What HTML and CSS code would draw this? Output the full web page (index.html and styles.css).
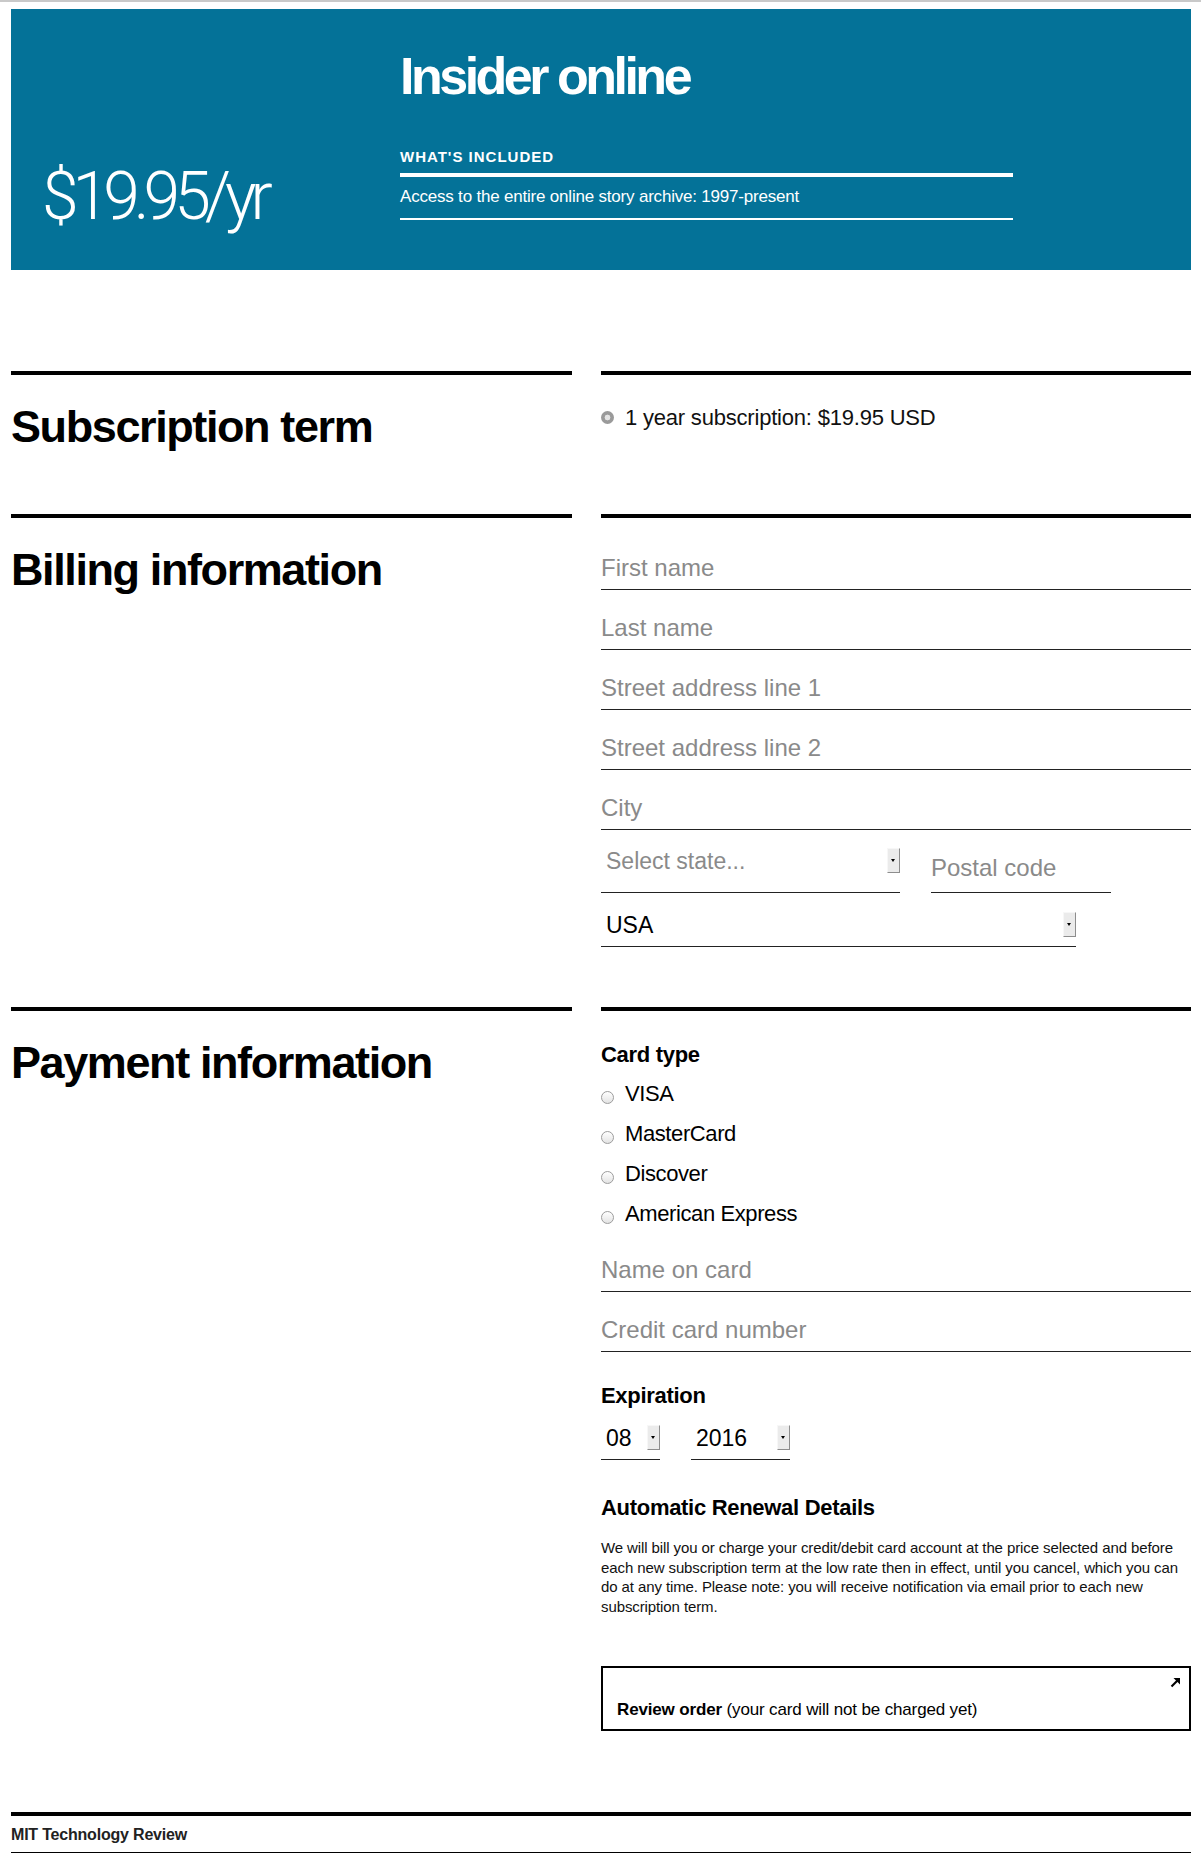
FILE: index.html
```html
<!DOCTYPE html>
<html lang="en">
<head>
<meta charset="utf-8">
<title>Insider online – Subscribe</title>
<link rel="stylesheet" href="styles.css">
</head>
<body>
<div class="page">
  <header class="hero">
    <div class="hero-price">$19.95/yr</div>
    <div class="hero-main">
      <h1 class="hero-title">Insider online</h1>
      <h2 class="hero-label">WHAT'S INCLUDED</h2>
      <ul class="hero-list">
        <li>Access to the entire online story archive: 1997-present</li>
      </ul>
    </div>
  </header>

  <form class="checkout" onsubmit="return false">
    <section class="row">
      <div class="row-head"><h2>Subscription term</h2></div>
      <div class="row-body row-body-term">
        <label class="term-option"><span class="radio radio-checked"></span>1 year subscription: $19.95 USD</label>
      </div>
    </section>

    <section class="row">
      <div class="row-head"><h2>Billing information</h2></div>
      <div class="row-body row-body-billing">
        <input class="field" type="text" placeholder="First name">
        <input class="field" type="text" placeholder="Last name">
        <input class="field" type="text" placeholder="Street address line 1">
        <input class="field" type="text" placeholder="Street address line 2">
        <input class="field" type="text" placeholder="City">
        <div class="field-pair">
          <div class="select select-state">
            <select class="is-placeholder"><option>Select state...</option></select>
            <span class="select-arrow"></span>
          </div>
          <input class="field field-postal" type="text" placeholder="Postal code">
        </div>
        <div class="select select-country">
          <select><option>USA</option></select>
          <span class="select-arrow"></span>
        </div>
      </div>
    </section>

    <section class="row">
      <div class="row-head"><h2>Payment information</h2></div>
      <div class="row-body row-body-payment">
        <h3 class="sub-head">Card type</h3>
        <ul class="card-options">
          <li class="card-option"><span class="radio"></span>VISA</li>
          <li class="card-option"><span class="radio"></span>MasterCard</li>
          <li class="card-option"><span class="radio"></span>Discover</li>
          <li class="card-option"><span class="radio"></span>American Express</li>
        </ul>
        <input class="field field-card" type="text" placeholder="Name on card">
        <input class="field" type="text" placeholder="Credit card number">

        <h3 class="sub-head sub-head-exp">Expiration</h3>
        <div class="exp-row">
          <div class="select select-month">
            <select><option>08</option></select>
            <span class="select-arrow"></span>
          </div>
          <div class="select select-year">
            <select><option>2016</option></select>
            <span class="select-arrow"></span>
          </div>
        </div>

        <h3 class="sub-head sub-head-renew">Automatic Renewal Details</h3>
        <p class="renew-text">We will bill you or charge your credit/debit card account at the price selected and before each new subscription term at the low rate then in effect, until you cancel, which you can do at any time. Please note: you will receive notification via email prior to each new subscription term.</p>

        <button class="review-btn" type="submit">
          <span class="review-text"><strong>Review order</strong> (your card will not be charged yet)</span>
          <svg class="review-arrow" width="11" height="11" viewBox="0 0 11 11" aria-hidden="true">
            <path d="M1.5 9.5 L7.5 3.5" stroke="#000" stroke-width="2.2" fill="none"/>
            <path d="M3.5 1 H10 V7.5 Z" fill="#000"/>
          </svg>
        </button>
      </div>
    </section>
  </form>

  <footer class="site-footer">MIT Technology Review</footer>
</div>
</body>
</html>
```

FILE: styles.css
```css
* {
  box-sizing: border-box;
}

body {
  margin: 0;
  border-top: 2px solid #c9c9c9;
  background: #fff;
  color: #000;
  font-family: "Liberation Sans", Arial, sans-serif;
}

.page {
  margin: 7px 10px 0 11px;
}

/* ---------- Hero ---------- */
.hero {
  background: #047298;
  color: #fff;
  display: grid;
  grid-template-columns: 358px 613px;
  padding: 41px 0 50px 31px;
}

.hero-price {
  align-self: end;
  margin-bottom: -5px;
  font-family: "Roboto", "Liberation Sans", sans-serif;
  font-weight: 300;
  font-size: 66px;
  line-height: 56px;
  letter-spacing: -6px;
  white-space: nowrap;
}

.hero-title {
  margin: 0 0 46px;
  font-size: 52px;
  line-height: 52px;
  font-weight: 700;
  letter-spacing: -3.5px;
}

.hero-label {
  margin: 0 0 7px;
  font-size: 15px;
  line-height: 18px;
  font-weight: 700;
  letter-spacing: 1px;
}

.hero-list {
  list-style: none;
  margin: 0;
  padding: 10px 0 11px;
  border-top: 4px solid #fff;
  border-bottom: 2px solid #fff;
  font-size: 17px;
  line-height: 20px;
  letter-spacing: -0.2px;
}

/* ---------- Form rows ---------- */
.checkout {
  margin-top: 101px;
}

.row {
  display: grid;
  grid-template-columns: 561px 590px;
  column-gap: 29px;
}

.row-head,
.row-body {
  border-top: 4px solid #000;
}

.row-head h2 {
  margin: 29px 0 0;
  font-size: 45px;
  line-height: 45px;
  font-weight: 700;
  letter-spacing: -1.4px;
}

.row-body-term {
  padding: 30px 0 83px;
}

.term-option {
  display: block;
  font-size: 22px;
  line-height: 26px;
  letter-spacing: -0.2px;
  color: #111;
}

.radio {
  display: inline-block;
  width: 13px;
  height: 13px;
  border-radius: 50%;
  border: 1px solid #9c9c9c;
  background: linear-gradient(#ffffff, #e3e3e3);
  margin-right: 11px;
  vertical-align: -3px;
}

.radio-checked {
  border: 0;
  background: radial-gradient(circle, #e4e4e4 0 2.6px, #9a9a9a 3.2px);
  vertical-align: 1px;
}

/* ---------- Fields ---------- */
.row-body-billing {
  padding: 22px 0 60px;
}

.field {
  display: block;
  width: 100%;
  height: 50px;
  margin: 0 0 10px;
  padding: 6px 0 0;
  border: 0;
  border-bottom: 1px solid #222;
  border-radius: 0;
  background: transparent;
  font-family: "Liberation Sans", Arial, sans-serif;
  font-size: 24px;
  color: #000;
  outline: none;
}

.field::placeholder {
  color: #8a8a8a;
  opacity: 1;
}

.field-pair {
  display: flex;
  align-items: flex-end;
  gap: 31px;
  margin: 13px 0 19px;
}

.field-postal {
  width: 180px;
  margin: 0;
  padding-top: 0;
}

.select {
  position: relative;
  border-bottom: 1px solid #222;
  padding-bottom: 8px;
}

.select select {
  display: block;
  width: 100%;
  height: 26px;
  margin: 0;
  padding: 0 18px 0 5px;
  border: 0;
  border-radius: 0;
  background: transparent;
  -webkit-appearance: none;
  appearance: none;
  font-family: "Liberation Sans", Arial, sans-serif;
  font-size: 23px;
  line-height: 26px;
  color: #000;
  outline: none;
}

.select select.is-placeholder {
  color: #8a8a8a;
}

.select-arrow {
  position: absolute;
  right: 0;
  top: 0;
  width: 13px;
  height: 25px;
  background: #ebebeb;
  border: 1px solid;
  border-color: #f7f7f7 #8d8d8d #8d8d8d #f7f7f7;
  pointer-events: none;
}

.select-arrow::after {
  content: "";
  position: absolute;
  left: 3px;
  top: 10px;
  border-left: 2.5px solid transparent;
  border-right: 2.5px solid transparent;
  border-top: 3px solid #000;
}

.select-state {
  width: 299px;
  padding-bottom: 18px;
}

.select-country {
  width: 475px;
}

/* ---------- Payment ---------- */
.row-body-payment {
  padding: 0 0 81px;
}

.sub-head {
  margin: 31px 0 0;
  font-size: 22px;
  line-height: 26px;
  font-weight: 700;
  letter-spacing: -0.3px;
}

.card-options {
  list-style: none;
  margin: 6px 0 0;
  padding: 0;
}

.card-option {
  font-size: 22px;
  line-height: 40px;
  letter-spacing: -0.4px;
}

.field-card {
  margin-top: 8px;
}

.sub-head-exp {
  margin-top: 31px;
}

.exp-row {
  display: flex;
  gap: 31px;
  margin-top: 16px;
}

.select-month {
  width: 59px;
}

.select-year {
  width: 99px;
}

.sub-head-renew {
  margin-top: 35px;
}

.renew-text {
  margin: 17px 0 0;
  font-size: 15px;
  line-height: 19.5px;
  letter-spacing: -0.1px;
  color: #111;
}

.review-btn {
  position: relative;
  display: flex;
  align-items: flex-end;
  width: 100%;
  height: 65px;
  margin-top: 50px;
  padding: 0 14px 8px;
  border: 2px solid #000;
  border-radius: 0;
  background: #fff;
  color: #000;
  text-align: left;
  font-family: "Liberation Sans", Arial, sans-serif;
  font-size: 17px;
  line-height: 22px;
  letter-spacing: -0.15px;
  cursor: pointer;
}

.review-text strong {
  font-weight: 700;
}

.review-arrow {
  position: absolute;
  top: 9px;
  right: 8px;
}

/* ---------- Footer ---------- */
.site-footer {
  border-top: 4px solid #000;
  border-bottom: 1px solid #000;
  padding: 9px 0 7px;
  font-size: 16px;
  line-height: 20px;
  font-weight: 700;
  letter-spacing: -0.2px;
  color: #222;
}
```
